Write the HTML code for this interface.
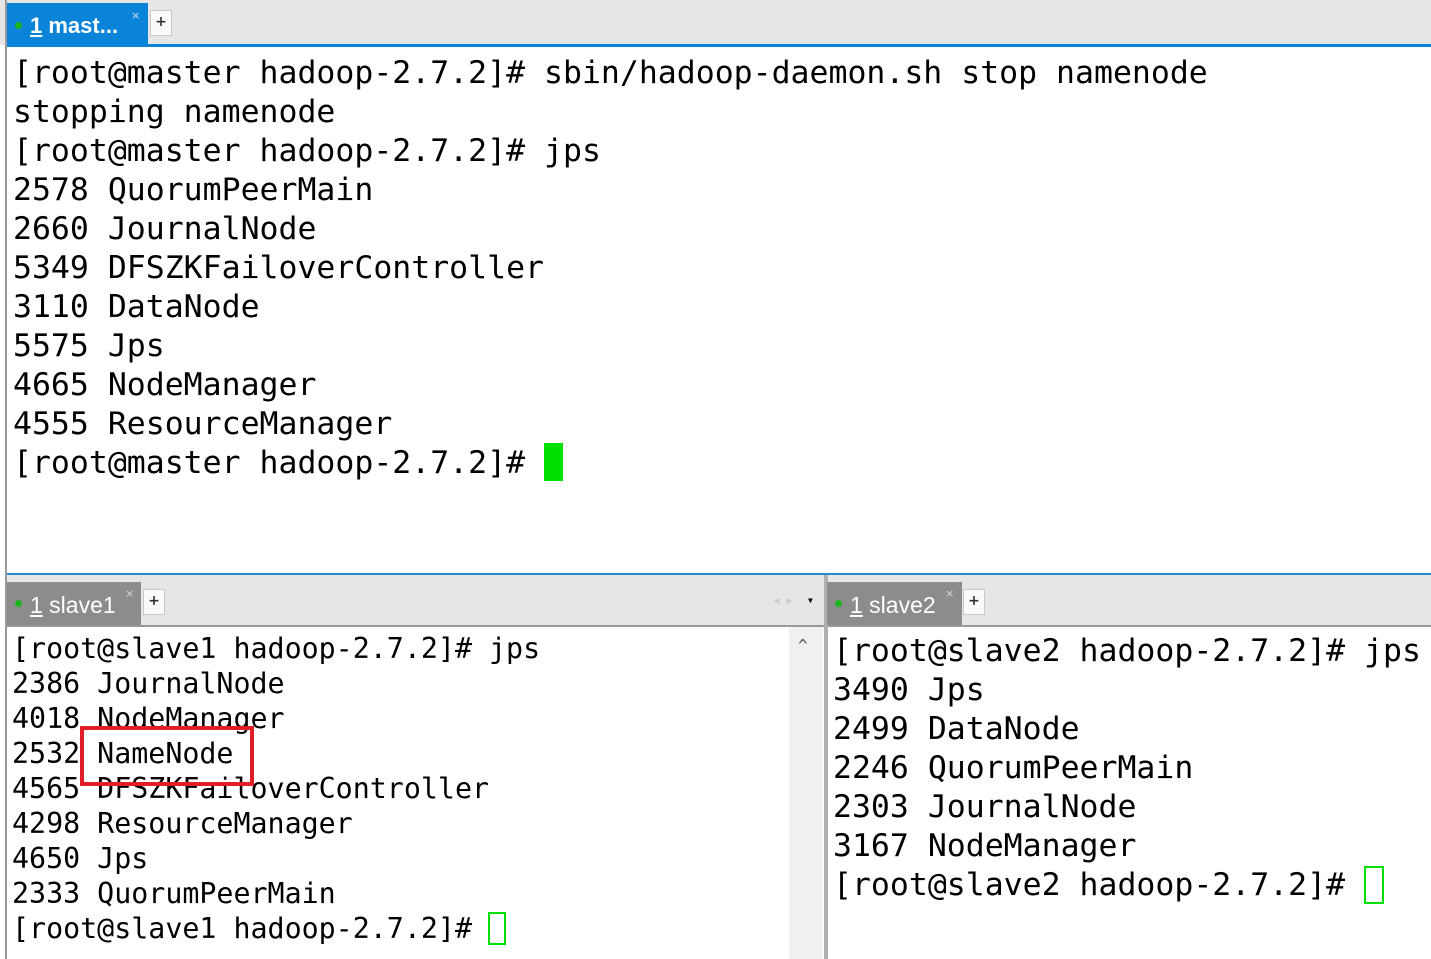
<!DOCTYPE html>
<html><head><meta charset="utf-8"><style>
*{margin:0;padding:0;box-sizing:border-box}
body{width:1431px;height:959px;position:relative;background:#fff;overflow:hidden;font-family:"DejaVu Sans Mono","Liberation Mono",monospace;color:#000}
.a{position:absolute}
.t{position:absolute;white-space:pre;line-height:1}
.tab{position:absolute;color:#fff;font-family:"Liberation Sans","DejaVu Sans",sans-serif;}
.dot{position:absolute;width:7px;height:7px;border-radius:50%;background:#1db31d}
.plus{position:absolute;background:#fafafa;border:1px solid #c8c8c8;font:bold 14px "DejaVu Sans",sans-serif;text-align:center;line-height:22px;color:#333}
.x{position:absolute;font:11px "DejaVu Sans",sans-serif;color:#ddd}
</style></head><body>
<div class="a" style="left:0;top:0;width:1431px;height:45px;background:#e6e6e6"></div>
<div class="a" style="left:5px;top:0;width:2px;height:959px;background:#9a9a9a"></div>
<div class="a" style="left:7px;top:3px;width:141px;height:44px;background:#0a84d8"></div>
<div class="a" style="left:7px;top:44px;width:1424px;height:3px;background:#0a84d8"></div>
<div class="dot" style="left:15px;top:22px"></div>
<div class="tab" style="left:30px;top:13px;font-size:22px;font-weight:bold"><u>1</u> mast...</div>
<div class="x" style="left:131px;top:9px">×</div>
<div class="plus" style="left:150px;top:10px;width:22px;height:26px">+</div>

<div class="t" style="left:13px;top:54px;font-size:31.5px;line-height:39px">[root@master hadoop-2.7.2]# sbin/hadoop-daemon.sh stop namenode
stopping namenode
[root@master hadoop-2.7.2]# jps
2578 QuorumPeerMain
2660 JournalNode
5349 DFSZKFailoverController
3110 DataNode
5575 Jps
4665 NodeManager
4555 ResourceManager
[root@master hadoop-2.7.2]# </div>
<div class="a" style="left:544px;top:443px;width:19px;height:38px;background:#00e000"></div>

<div class="a" style="left:7px;top:573px;width:1424px;height:2px;background:#2a8ad0"></div>
<div class="a" style="left:7px;top:575px;width:1424px;height:50px;background:#e6e6e6"></div>
<div class="a" style="left:7px;top:582px;width:134px;height:43px;background:#8c8c8c"></div>
<div class="dot" style="left:15px;top:600px"></div>
<div class="tab" style="left:30px;top:592px;font-size:23px"><u>1</u> slave1</div>
<div class="x" style="left:125px;top:587px">×</div>
<div class="plus" style="left:143px;top:589px;width:22px;height:26px">+</div>
<div class="a" style="left:773px;top:594px;font-size:11px;color:#ccc">◀ ▶</div>
<div class="a" style="left:808px;top:596px;font-size:8px;color:#000">▼</div>

<div class="a" style="left:824px;top:575px;width:4px;height:384px;background:#b0b0b0"></div>
<div class="a" style="left:827px;top:582px;width:135px;height:43px;background:#8c8c8c"></div>
<div class="dot" style="left:835px;top:600px"></div>
<div class="tab" style="left:850px;top:592px;font-size:23px"><u>1</u> slave2</div>
<div class="x" style="left:945px;top:587px">×</div>
<div class="plus" style="left:963px;top:589px;width:22px;height:26px">+</div>

<div class="a" style="left:7px;top:625px;width:817px;height:2px;background:#999"></div>
<div class="a" style="left:828px;top:625px;width:603px;height:2px;background:#999"></div>
<div class="a" style="left:789px;top:627px;width:34px;height:332px;background:#f0f0f0"></div>
<div class="a" style="left:798px;top:636px;font-size:16px;color:#555">^</div>

<div class="t" style="left:12px;top:631px;font-size:28.3px;line-height:35px">[root@slave1 hadoop-2.7.2]# jps
2386 JournalNode
4018 NodeManager
2532 NameNode
4565 DFSZKFailoverController
4298 ResourceManager
4650 Jps
2333 QuorumPeerMain
[root@slave1 hadoop-2.7.2]# </div>
<div class="a" style="left:488px;top:912px;width:18px;height:33px;border:2px solid #00e000"></div>
<div class="a" style="left:80px;top:726px;width:174px;height:60px;border:4px solid #e01e28"></div>

<div class="t" style="left:833px;top:632px;font-size:31.5px;line-height:39px">[root@slave2 hadoop-2.7.2]# jps
3490 Jps
2499 DataNode
2246 QuorumPeerMain
2303 JournalNode
3167 NodeManager
[root@slave2 hadoop-2.7.2]# </div>
<div class="a" style="left:1364px;top:866px;width:20px;height:38px;border:2px solid #00e000"></div>
</body></html>
